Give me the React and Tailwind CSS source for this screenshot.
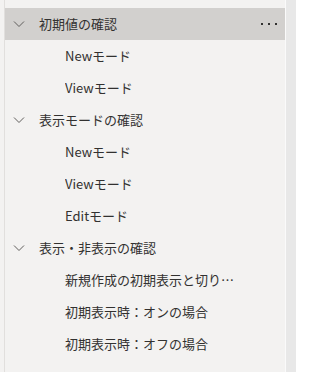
const groups = [
  {
    title: '初期値の確認',
    selected: true,
    items: ['Newモード', 'Viewモード'],
  },
  {
    title: '表示モードの確認',
    items: ['Newモード', 'Viewモード', 'Editモード'],
  },
  {
    title: '表示・非表示の確認',
    items: ['新規作成の初期表示と切り替え', '初期表示時：オンの場合', '初期表示時：オフの場合'],
  },
];

const Chevron = () => (
  <svg width="12" height="12" viewBox="0 0 12 12" className="text-[#605e5c]">
    <path d="M1 3.5 L6 8.5 L11 3.5" fill="none" stroke="currentColor" strokeWidth="1" />
  </svg>
);

const App = () => {
  return (
    <div
      className="flex w-[296px] h-[372px] bg-[#f3f2f1] text-[#323130] text-[13px] overflow-hidden"
      style={{ fontFamily: '"Segoe UI", "Noto Sans CJK JP", sans-serif' }}
    >
      {/* left strip */}
      <div className="w-[5px] shrink-0 border-r border-[#e1dfdd]" />

      {/* tree */}
      <div className="flex-1 flex flex-col pt-2">
        {groups.map((g) => (
          <div key={g.title} className="flex flex-col">
            <div className={`flex items-center h-8 pl-[8px] pr-[8px] ${g.selected ? 'bg-[#d2d0ce]' : ''}`}>
              <div className="w-[12px] flex justify-center">
                <Chevron />
              </div>
              <span className="ml-[14px] flex-1">{g.title}</span>
              {g.selected && (
                <div className="flex gap-[5px] items-center">
                  <div className="w-[2px] h-[2px] bg-[#323130]" />
                  <div className="w-[2px] h-[2px] bg-[#323130]" />
                  <div className="w-[2px] h-[2px] bg-[#323130]" />
                </div>
              )}
            </div>
            {g.items.map((item) => (
              <div key={item} className="flex items-center h-8 pl-[60px]">
                <span className="w-[176px] truncate">{item}</span>
              </div>
            ))}
          </div>
        ))}
      </div>

      {/* right strip */}
      <div className="w-[11px] shrink-0 bg-[#e8e8e8] border-l border-[#fafafa]" />
    </div>
  );
};

export default App;
